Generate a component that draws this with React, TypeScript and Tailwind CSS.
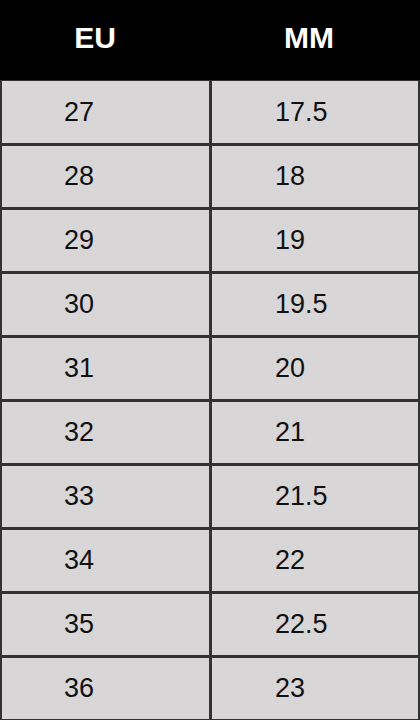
const rows: [string, string][] = [
  ["27", "17.5"],
  ["28", "18"],
  ["29", "19"],
  ["30", "19.5"],
  ["31", "20"],
  ["32", "21"],
  ["33", "21.5"],
  ["34", "22"],
  ["35", "22.5"],
  ["36", "23"],
]

export default function App() {
  return (
    <div
      className="w-[420px] h-[720px] overflow-hidden bg-[#333333]"
      style={{ fontFamily: '"Liberation Sans", Arial, sans-serif' }}
    >
      <div className="flex h-[80px] bg-black text-white font-bold text-[30px]">
        <div className="flex w-[210px] items-center justify-center pr-[20px] pb-[5px]">EU</div>
        <div className="flex w-[210px] items-center justify-center pr-[12px] pb-[5px]">MM</div>
      </div>
      <div className="flex flex-col gap-[3px] pt-[1px] pl-[2px] pr-[2px]">
        {rows.map(([eu, mm], i) => (
          <div key={eu} className={`flex gap-[3px] ${i === 0 ? "h-[62px]" : "h-[61px]"}`}>
            <div className="flex w-[207px] items-center bg-[#d8d6d7] pl-[62px] text-[27px] text-[#111111]">
              {eu}
            </div>
            <div className="flex w-[206px] items-center bg-[#d8d6d7] pl-[63px] text-[27px] text-[#111111]">
              {mm}
            </div>
          </div>
        ))}
      </div>
    </div>
  )
}
